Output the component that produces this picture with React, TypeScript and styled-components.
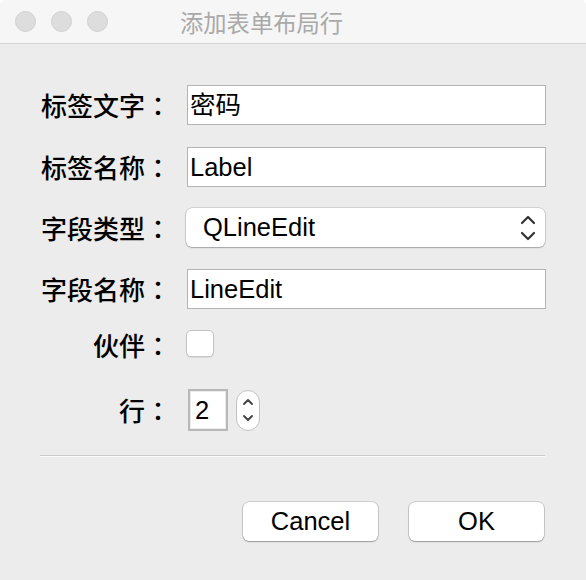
import React from "react";
import styled, { createGlobalStyle } from "styled-components";

const Global = createGlobalStyle`
  html, body { margin: 0; padding: 0; background: #ffffff; }
  body { font-family: "Liberation Sans", "Noto Sans CJK SC", sans-serif; }
  * { box-sizing: border-box; }
`;

const FONT = `"Liberation Sans", "Noto Sans CJK SC", sans-serif`;

const Window = styled.div`
  width: 586px;
  height: 580px;
  display: flex;
  flex-direction: column;
  background: #ececec;
  border-radius: 6px 6px 0 0;
  overflow: hidden;
`;

const TitleBar = styled.div`
  height: 44px;
  flex: none;
  display: flex;
  align-items: center;
  background: #f6f6f6;
  border-bottom: 1px solid #d3d3d3;
  padding-left: 15px;
  position: relative;
`;

const Lights = styled.div`
  display: flex;
  gap: 15px;
`;

const Light = styled.span`
  width: 21px;
  height: 21px;
  border-radius: 50%;
  background: #dddddd;
  border: 1px solid #d0d0d0;
`;

const Title = styled.div`
  position: absolute;
  left: 180px;
  top: 7px;
  font-family: "Noto Sans CJK SC", sans-serif;
  font-size: 23.3px;
  line-height: 30px;
  color: #a9a9a9;
`;

const Body = styled.div`
  padding: 41px 41px 0 40px;
  display: flex;
  flex-direction: column;
`;

const Form = styled.div`
  display: grid;
  grid-template-columns: 131px 1fr;
  grid-template-rows: 40px 39px 39px 40px 27px 60px;
  row-gap: 22px;
  column-gap: 15px;
  align-items: center;
`;

const Label = styled.div`
  font-family: "Noto Sans CJK SC", sans-serif;
  font-size: 26px;
  font-weight: 500;
  line-height: 30px;
  color: #000;
  text-align: right;
  white-space: nowrap;
  display: flex;
  justify-content: flex-end;
`;

const Colon = styled.span`
  font-family: "Noto Sans CJK TC", sans-serif;
  width: 26px;
  text-align: center;
`;

const TextInput = styled.div`
  height: 40px;
  width: 100%;
  margin-left: 1px;
  background: #fff;
  border: 1px solid #b3b3b3;
  font-family: ${FONT};
  font-size: 25.5px;
  line-height: 38px;
  padding-left: 2px;
  color: #000;
`;

const Combo = styled.div`
  height: 39px;
  width: 359px;
  background: #fff;
  border-radius: 6px;
  box-shadow: 0 0 0 0.5px rgba(0, 0, 0, 0.22), 0 1px 1.5px rgba(0, 0, 0, 0.22);
  display: flex;
  align-items: center;
  justify-content: space-between;
  padding: 0 9px 0 17px;
  font-family: ${FONT};
  font-size: 25.5px;
  color: #000;
`;

const Checkbox = styled.div`
  width: 28px;
  height: 27px;
  margin-top: -3px;
  border-radius: 5px;
  background: #fff;
  border: 1px solid #c4c4c4;
  box-shadow: 0 0.5px 1px rgba(0, 0, 0, 0.08);
`;

const SpinRow = styled.div`
  display: flex;
  align-items: center;
  gap: 8px;
  padding-left: 2px;
`;

const SpinField = styled.div`
  width: 40px;
  height: 42px;
  background: #fff;
  border: 2px solid #b8b8b8;
  box-shadow: inset 0 0 0 1px #ececec;
  font-family: ${FONT};
  font-size: 25.5px;
  line-height: 38px;
  padding-left: 5px;
  color: #000;
`;

const Stepper = styled.div`
  width: 24px;
  height: 41px;
  border-radius: 12px;
  background: #fff;
  border: 1px solid #c2c2c2;
  display: flex;
  align-items: center;
  justify-content: center;
`;

const Separator = styled.div`
  margin-top: 15px;
  height: 2px;
  width: 505px;
  border-top: 1px solid #c9c9c9;
  border-bottom: 1px solid #fafafa;
`;

const Buttons = styled.div`
  margin-top: 45px;
  display: flex;
  justify-content: flex-end;
  gap: 31px;
  padding-right: 1px;
`;

const Button = styled.div`
  width: 135px;
  height: 39px;
  background: #fff;
  border-radius: 6px;
  box-shadow: 0 0 0 0.5px rgba(0, 0, 0, 0.25), 0 1px 1.5px rgba(0, 0, 0, 0.25);
  display: flex;
  align-items: center;
  justify-content: center;
  font-family: ${FONT};
  font-size: 25.5px;
  color: #000;
`;

const ComboArrows = () => (
  <svg width="16" height="26" viewBox="0 0 16 26" fill="none">
    <path d="M2 8 L8 2 L14 8" stroke="#333" strokeWidth="2.2" strokeLinecap="round" strokeLinejoin="round" />
    <path d="M2 18 L8 24 L14 18" stroke="#333" strokeWidth="2.2" strokeLinecap="round" strokeLinejoin="round" />
  </svg>
);

const StepArrows = () => (
  <svg width="12" height="26" viewBox="0 0 12 26" fill="none">
    <path d="M2 7 L6 3 L10 7" stroke="#444" strokeWidth="1.9" strokeLinecap="round" strokeLinejoin="round" />
    <path d="M2 19 L6 23 L10 19" stroke="#444" strokeWidth="1.9" strokeLinecap="round" strokeLinejoin="round" />
  </svg>
);

const FieldLabel = ({ text }: { text: string }) => (
  <Label>
    <span>{text}</span>
    <Colon>：</Colon>
  </Label>
);

export default function App() {
  return (
    <>
      <Global />
      <Window>
        <TitleBar>
          <Lights>
            <Light />
            <Light />
            <Light />
          </Lights>
          <Title>添加表单布局行</Title>
        </TitleBar>
        <Body>
          <Form>
            <FieldLabel text="标签文字" />
            <TextInput>密码</TextInput>
            <FieldLabel text="标签名称" />
            <TextInput>Label</TextInput>
            <FieldLabel text="字段类型" />
            <Combo>
              <span>QLineEdit</span>
              <ComboArrows />
            </Combo>
            <FieldLabel text="字段名称" />
            <TextInput>LineEdit</TextInput>
            <FieldLabel text="伙伴" />
            <Checkbox />
            <FieldLabel text="行" />
            <SpinRow>
              <SpinField>2</SpinField>
              <Stepper>
                <StepArrows />
              </Stepper>
            </SpinRow>
          </Form>
          <Separator />
          <Buttons>
            <Button>Cancel</Button>
            <Button>OK</Button>
          </Buttons>
        </Body>
      </Window>
    </>
  );
}
